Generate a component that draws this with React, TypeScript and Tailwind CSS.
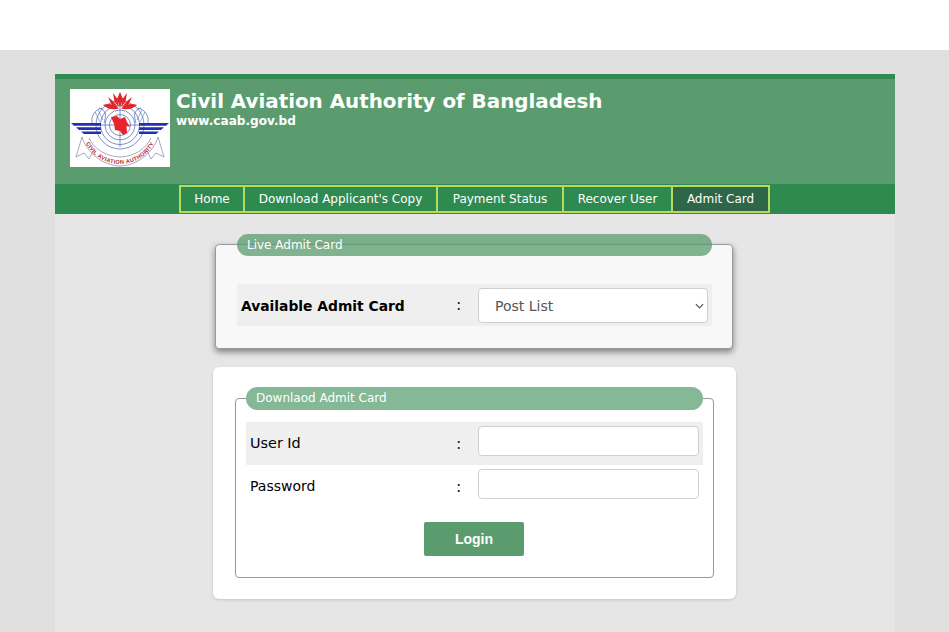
import React from "react";

const font = { fontFamily: '"DejaVu Sans", Verdana, sans-serif' };

function Logo() {
  return (
    <svg viewBox="0 0 100 78" className="w-[100px] h-[78px] bg-white shrink-0 block">
      <g fill="none" stroke="#4a62ad" strokeWidth="0.7">
        <path d="M32 19 C24 21 21 28 22 34" />
        <path d="M68 19 C76 21 79 28 78 34" />
        <path d="M29 19 C37 21 36 28 34 34" />
        <path d="M71 19 C63 21 64 28 66 34" />
        <path d="M25 23 L30 33 M28 21 L33 31 M75 23 L70 33 M72 21 L67 31" strokeWidth="0.5" />
        <circle cx="50" cy="36" r="24" />
        <circle cx="50" cy="36" r="19.5" />
        <circle cx="50" cy="36" r="15" />
        <circle cx="50" cy="36" r="10.5" />
        <path d="M50 14 V58 M28 36 H72" />
      </g>
      <g fill="#e0262b">
        <path d="M50 3 L53 10 L50 18 L47 10 Z" />
        <path d="M43 4 L47.5 10 L49 18 L44.5 13 Z" />
        <path d="M57 4 L52.5 10 L51 18 L55.5 13 Z" />
        <path d="M38 8 L43.5 12.5 L48 18.5 L41.5 15.5 Z" />
        <path d="M62 8 L56.5 12.5 L52 18.5 L58.5 15.5 Z" />
        <path d="M33 16 C39 14 45 15.5 49 19.5 C43 21 37 20 33 16 Z" />
        <path d="M67 16 C61 14 55 15.5 51 19.5 C57 21 63 20 67 16 Z" />
      </g>
      <g fill="#1f2fb8">
        <path d="M1 34 H31 V36.8 H4 Z" />
        <path d="M6 38.2 H31 V41 H9 Z" />
        <path d="M11 42.4 H31 V45 H14 Z" />
        <path d="M99 34 H69 V36.8 H96 Z" />
        <path d="M94 38.2 H69 V41 H91 Z" />
        <path d="M89 42.4 H69 V45 H86 Z" />
      </g>
      <path d="M41 28 L47 27 L50 30 L55 28 L57 33 L60 38 L56.5 37 L57 44 L53 46 L50 42 L45 41 L44 35 Z" fill="#e8242b" />
      <g fill="none" stroke="#7d84a8" strokeWidth="0.7">
        <path d="M19 49 C24 60 36 67.5 50 68 C64 67.5 76 60 81 49" />
        <path d="M12 48 C17 64 33 76.5 50 77 C67 76.5 83 64 88 48" />
        <path d="M12 48 L6 68 L14 64 L19 70 L23 62" />
        <path d="M88 48 L94 68 L86 64 L81 70 L77 62" />
      </g>
      <defs>
        <path id="ribbon" d="M14.5 51 C20 65 34 75 50 75 C66 75 80 65 85.5 51" />
      </defs>
      <text fill="#b52a2e" fontSize="5.6" fontWeight="700" letterSpacing="0.35" style={{ fontFamily: '"Liberation Sans", Arial, sans-serif' }}>
        <textPath href="#ribbon" startOffset="50%" textAnchor="middle">
          CIVIL AVIATION AUTHORITY
        </textPath>
      </text>
    </svg>
  );
}

const navItems = [
  { label: "Home", w: "w-[66px]" },
  { label: "Download Applicant's Copy", w: "w-[195px]" },
  { label: "Payment Status", w: "w-[128px]" },
  { label: "Recover User", w: "w-[111px]" },
  { label: "Admit Card", w: "w-[99px]", active: true },
];

function Colon() {
  return <span className="text-[16px] leading-none text-[#222]">:</span>;
}

export default function App() {
  return (
    <div className="min-h-screen flex flex-col bg-[#e0e0e0]" style={font}>
      <div className="h-[50px] bg-white shrink-0" />
      <div className="mt-6 ml-[55px] w-[840px] flex-1 flex flex-col bg-[#e6e6e6]">
        <header className="h-[110px] border-t-[5px] border-[#328a50] bg-[#5a9c6e] flex pt-[10px] pl-[15px] gap-[6px] shrink-0">
          <Logo />
          <div className="text-white font-bold pt-px">
            <div className="text-[19.86px] leading-[24px]">Civil Aviation Authority of Bangladesh</div>
            <div className="text-[12.1px] leading-[15px]">www.caab.gov.bd</div>
          </div>
        </header>
        <nav className="h-[30px] bg-[#2f8a4f] flex justify-center pt-px shrink-0">
          <div className="flex h-[28px] mr-[1px]">
            {navItems.map((it, i) => (
              <div
                key={it.label}
                className={
                  "flex items-center justify-center border-2 border-[#b9d95c] text-[12px] text-white " +
                  it.w +
                  (i > 0 ? " -ml-[2px]" : "") +
                  (it.active ? " bg-[#2d6748]" : "")
                }
              >
                {it.label}
              </div>
            ))}
          </div>
        </nav>
        <main className="flex flex-col">
          <section className="relative mt-[30px] ml-[160px] w-[518px] h-[105px] bg-[#f8f8f8] border border-[#9a9a9a] rounded-[4px] shadow-[0_3px_6px_rgba(0,0,0,0.45)] flex flex-col">
            <div className="absolute left-[21px] top-[-11px] w-[475px] h-[22px] rounded-full bg-[#5a9c6e]/75 text-white text-[12px] leading-[22px] pl-[10px]">
              Live Admit Card
            </div>
            <div className="mt-[39px] mx-[21px] w-[475px] h-[42px] bg-[#efefef] grid grid-cols-[219px_22px_1fr] items-center">
              <span className="pl-[4px] pt-[2px] text-[13.85px] font-bold text-black whitespace-nowrap">Available Admit Card</span>
              <Colon />
              <div className="relative w-[230px] h-[35px]">
                <select className="w-full h-full appearance-none bg-white border border-[#cfcfcf] rounded-[4px] pl-[16px] pt-[3px] text-[14px] text-[#555]" style={font} defaultValue="Post List">
                  <option>Post List</option>
                </select>
                <svg viewBox="0 0 10 6" className="absolute right-[4px] top-[15px] w-[9px] h-[6px] pointer-events-none" fill="none" stroke="#555" strokeWidth="1.3">
                  <path d="M1 1 L5 5 L9 1" />
                </svg>
              </div>
            </div>
          </section>
          <section className="mt-[18px] ml-[158px] w-[523px] h-[232px] bg-white rounded-[6px] shadow-[0_1px_3px_rgba(0,0,0,0.15)] pt-[20px] pl-[22px]">
            <fieldset className="w-[478px] h-[191px] border border-[#999] rounded-[4px] px-[10px]">
              <legend className="w-[457px] h-[23px] rounded-full bg-[#84b896] text-white text-[12px] leading-[23px] pl-[10px]">
                Downlaod Admit Card
              </legend>
              <div className="mt-[12px] grid grid-cols-[210px_22px_1fr] h-[43px] bg-[#efefef] items-center">
                <span className="pl-[4px] text-[14.4px] text-black">User Id</span>
                <Colon />
                <input className="w-[221px] h-[30px] bg-white border border-[#cfcfcf] rounded-[4px] -mt-[6px]" />
              </div>
              <div className="grid grid-cols-[210px_22px_1fr] h-[43px] items-center">
                <span className="pl-[4px] text-[14px] text-black">Password</span>
                <Colon />
                <input className="w-[221px] h-[30px] bg-white border border-[#cfcfcf] rounded-[4px] -mt-[6px]" />
              </div>
              <div className="flex justify-center mt-[14px] pr-[1px]">
                <button className="w-[100px] h-[34px] bg-[#5a9c6e] rounded-[2px] text-white text-[14px] font-bold" style={{ fontFamily: '"Liberation Sans", Arial, sans-serif' }}>
                  Login
                </button>
              </div>
            </fieldset>
          </section>
        </main>
      </div>
    </div>
  );
}
